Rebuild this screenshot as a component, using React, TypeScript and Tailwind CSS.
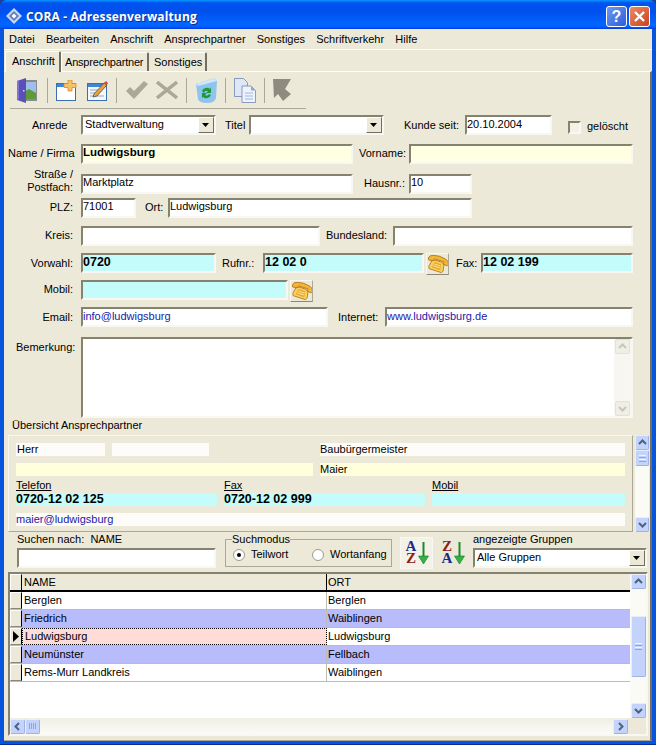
import type { ReactNode } from "react"

const sunken = "border-2 border-t-[#85836f] border-l-[#85836f] border-r-[#f8f7f1] border-b-[#f8f7f1]"

function Field({ className, text, tone, high }: { className: string; text?: string; tone?: string; high?: boolean }) {
  return (
    <div className={`${className} ${sunken} h-[20px] flex items-center ${high ? "pb-[3px]" : "pb-[2px]"} overflow-hidden whitespace-nowrap ${tone ?? "bg-white"}`}>
      {text}
    </div>
  )
}

function DropButton() {
  return (
    <div className="w-[16px] h-[16px] bg-[#ece9d8] border border-t-white border-l-white border-r-[#716f64] border-b-[#716f64] flex items-center justify-center">
      <svg width="8" height="5" viewBox="0 0 8 5"><path d="M0 0h7L3.500 4z" fill="#000" /></svg>
    </div>
  )
}

function Combo({ className, text }: { className: string; text?: string }) {
  return (
    <div className={`${className} ${sunken} h-[20px] bg-white flex items-center justify-between pl-[2px] whitespace-nowrap`}>
      <span className="pb-[1px]">{text}</span>
      <DropButton />
    </div>
  )
}

function Row({ className, children }: { className: string; children: ReactNode }) {
  return <div className={`${className} h-[20px] flex items-center shrink-0`}>{children}</div>
}

function Label({ className, children, low }: { className: string; children: ReactNode; low?: boolean }) {
  return <div className={`${className} shrink-0 whitespace-nowrap ${low ? "pt-[1px]" : "pb-[1px]"}`}>{children}</div>
}

function ScrollBtn({ dir, disabled, size }: { dir: "up" | "down" | "left" | "right"; disabled?: boolean; size?: string }) {
  const d = { up: "M2 7l3.500-3.500L9 7", down: "M2 4l3.500 3.500L9 4", left: "M7 2L3.500 5.500 7 9", right: "M4 2l3.500 3.500L4 9" }[dir]
  return (
    <div className={`${size ?? "w-[15px]"} h-[15px] shrink-0 rounded-[2px] border flex items-center justify-center ${disabled ? "bg-[#f0efe6] border-[#e4e2d6]" : "bg-[#c3d3fb] border-t-[#e6eefc] border-l-[#e6eefc] border-r-[#9db3e2] border-b-[#9db3e2]"}`}>
      <svg width="11" height="11" viewBox="0 0 11 11" fill="none">
        <path d={d} stroke={disabled ? "#c8c6b8" : "#4d6185"} strokeWidth="2" />
      </svg>
    </div>
  )
}

function ThumbV({ className }: { className: string }) {
  return (
    <div className={`${className} shrink-0 rounded-[2px] bg-[#c3d3fb] border border-t-[#e6eefc] border-l-[#e6eefc] border-r-[#9db3e2] border-b-[#9db3e2] flex flex-col items-center justify-center gap-[1px]`}>
      <div className="w-[7px] h-[1px] bg-[#eef4fe]" />
      <div className="w-[7px] h-[1px] bg-[#8fa6d6]" />
      <div className="w-[7px] h-[1px] bg-[#eef4fe]" />
      <div className="w-[7px] h-[1px] bg-[#8fa6d6]" />
    </div>
  )
}

function DoorIcon() {
  return (
    <svg width="22" height="25" viewBox="0 0 22 25" className="shrink-0">
      <rect x="6" y="2" width="15" height="21" fill="#8a8a90" />
      <rect x="8" y="4" width="12" height="17" fill="#9cc0ea" />
      <path d="M8 14l5-3 7 4v6H8z" fill="#5d9a3c" />
      <path d="M1 3l9-3v25l-9-3z" fill="#5a50b8" />
      <path d="M1 3l2-.7v19.500l-2-.3z" fill="#7d74d4" />
      <rect x="7" y="12" width="1.500" height="1.500" fill="#d8d8f0" />
    </svg>
  )
}

function NewIcon() {
  return (
    <svg width="21" height="21" viewBox="0 0 21 21" className="shrink-0">
      <rect x="0.500" y="3.500" width="19" height="17" fill="#fff" stroke="#3d6fb0" />
      <rect x="1" y="4" width="18" height="3" fill="#3f86d8" />
      <path d="M12 0h4v3.500h4v4h-4V11h-4V7.500H8v-4h4z" fill="#f5c265" stroke="#d58a2c" strokeWidth="0.8" />
    </svg>
  )
}

function EditIcon() {
  return (
    <svg width="21" height="21" viewBox="0 0 21 21" className="shrink-0">
      <rect x="0.500" y="3.500" width="19" height="17" fill="#f4f7fb" stroke="#3d6fb0" />
      <rect x="1" y="4" width="18" height="3" fill="#3f86d8" />
      <path d="M3 10h9M3 13h7M3 16h14" stroke="#8fa9c8" />
      <path d="M6 17l1-3L17 3l3 2-10 11z" fill="#e8a33c" stroke="#444" strokeWidth="0.7" />
      <path d="M17 3l3 2 1-2-2-2z" fill="#d84a3c" />
    </svg>
  )
}

function CheckIcon() {
  return (
    <svg width="22" height="18" viewBox="0 0 22 18" className="shrink-0">
      <path d="M0 10l4-4 4 4L18 0l4 3L8 18z" fill="#aca899" />
    </svg>
  )
}

function CrossIcon() {
  return (
    <svg width="22" height="18" viewBox="0 0 22 18" className="shrink-0">
      <path d="M1 1l20 16M21 1L1 17" stroke="#aca899" strokeWidth="3.400" />
    </svg>
  )
}

function BinIcon() {
  return (
    <svg width="22" height="25" viewBox="0 0 22 25" className="shrink-0">
      <path d="M1 6l18-6 3 3-1 17q-1 5-9 5T3 21z" fill="#8fc4ee" />
      <path d="M1 6l18-6 3 3-19 5z" fill="#cfe6f8" />
      <path d="M7 13a5 5 0 0 1 8-2l1-2v6h-5l2-2a3 3 0 0 0-4 2zM16 17a5 5 0 0 1-8 2l-1 1v-5h5l-2 2a3 3 0 0 0 4-1z" fill="#1d9a38" />
    </svg>
  )
}

function CopyIcon() {
  return (
    <svg width="22" height="25" viewBox="0 0 22 25" className="shrink-0">
      <path d="M.500.500h9l4 4v14h-13z" fill="#dfe7f6" stroke="#6f86b8" strokeWidth="0.8" />
      <path d="M8 8h9l4.500 4.500v12H8z" fill="#eef3fb" stroke="#6f86b8" strokeWidth="0.8" />
      <path d="M17 8l4.500 4.500H17z" fill="#8fa9d8" />
      <path d="M11 15h8M11 18h8M11 21h8" stroke="#9fb6dc" />
    </svg>
  )
}

function BackIcon() {
  return (
    <svg width="20" height="23" viewBox="0 0 20 23" className="shrink-0">
      <path d="M0 0h18l-6 10 6 5-8 7-5-7-4 4z" fill="#8f8c7f" />
    </svg>
  )
}

function PhoneIcon() {
  return (
    <div className="w-[23px] h-[22px] self-start shrink-0 ml-[2px] flex items-center justify-center border border-t-[#f8f7f1] border-l-[#f8f7f1] border-r-[#aca899] border-b-[#8a8878]">
      <svg width="21" height="20" viewBox="0 0 21 20">
        <g transform="rotate(18 10.500 10)">
          <path d="M0 7q0-3 4-4 6-2 13 0 4 1 4 4l-1 2-4-1V6H6v2L1 9z" fill="#f2b632" stroke="#b5761a" strokeWidth="0.8" />
          <path d="M4 9l3-2h7l3 2 1 6-1 2H4l-1-2z" fill="#f7d25a" stroke="#b5761a" strokeWidth="0.8" />
          <path d="M7 9h7l1 6H6z" fill="#e8a52c" />
          <path d="M7 11h7M7 13h7" stroke="#fbe69a" />
        </g>
      </svg>
    </div>
  )
}

function SortIcon({ first, second, firstColor, secondColor }: { first: string; second: string; firstColor: string; secondColor: string }) {
  return (
    <div className="flex items-start h-[24px]">
      <div className="w-[13px] flex flex-col items-center font-['Liberation_Serif',serif] font-bold text-[15px] leading-[11px]">
        <span className={firstColor}>{first}</span>
        <span className={`mt-[1px] ${secondColor}`}>{second}</span>
      </div>
      <svg width="11" height="24" viewBox="0 0 11 24">
        <path d="M4.500 1h2v15h-2z" fill="#1a8a2c" />
        <path d="M.500 15h10l-5 8z" fill="#35b04a" stroke="#1a7a28" strokeWidth="0.6" />
      </svg>
    </div>
  )
}

const rows = [
  { name: "Berglen", ort: "Berglen", bg: "bg-white" },
  { name: "Friedrich", ort: "Waiblingen", bg: "bg-[#b8bcfb]" },
  { name: "Ludwigsburg", ort: "Ludwigsburg", bg: "bg-white", current: true },
  { name: "Neumünster", ort: "Fellbach", bg: "bg-[#b8bcfb]" },
  { name: "Rems-Murr Landkreis", ort: "Waiblingen", bg: "bg-white" },
]

export default function App() {
  return (
    <div className="w-[656px] h-[745px] bg-[#1c3f9c] font-['Liberation_Sans',sans-serif] text-[11px] leading-[13px] text-black overflow-hidden">
      <div className="h-full flex flex-col rounded-t-[7px] bg-[#0855dd] border-b-[1px] border-[#0a2f9a]">
        {/* title bar */}
        <div className="h-[29px] shrink-0 rounded-t-[7px] flex items-center pt-[3px] pl-[6px] pr-[6px] bg-[linear-gradient(180deg,#0997ff_0%,#0053ee_10%,#0050ee_40%,#0066ff_85%,#005bff_93%,#003dd7_100%)]">
          <svg width="16" height="16" viewBox="0 0 16 16" className="shrink-0">
            <path d="M8 0l8 8-8 8-8-8z" fill="#c9d8f0" />
            <path d="M8 3l5 5-5 5-5-5z" fill="#5f7fb8" />
            <path d="M8 5.500L10.500 8 8 10.500 5.500 8z" fill="#fff" />
          </svg>
          <div className="ml-[4px] flex-1 text-white font-['Open_Sans',sans-serif] font-bold text-[12px] tracking-[0.15px] [text-shadow:1px_1px_#0f2f8f]">
            CORA - Adressenverwaltung
          </div>
          <div className="w-[21px] h-[21px] rounded-[3px] border border-white bg-[linear-gradient(135deg,#6d98f0,#2a5fdc)] flex items-center justify-center text-white font-bold text-[16px]">?</div>
          <div className="ml-[2px] w-[21px] h-[21px] rounded-[3px] border border-white bg-[linear-gradient(135deg,#ec8a66,#c9421f)] flex items-center justify-center">
            <svg width="13" height="13" viewBox="0 0 13 13"><path d="M2 2l9 9M11 2l-9 9" stroke="#fff" strokeWidth="2.400" /></svg>
          </div>
        </div>

        <div className="mx-[4px] mb-[3px] flex-1 min-h-0 bg-[#ece9d8] flex flex-col">
          {/* menu */}
          <div className="h-[20px] shrink-0 flex items-center pl-[5px] gap-[11.200px] border-b border-white box-content">
            {["Datei", "Bearbeiten", "Anschrift", "Ansprechpartner", "Sonstiges", "Schriftverkehr", "Hilfe"].map((m) => (
              <span key={m}>{m}</span>
            ))}
          </div>

          {/* tabs */}
          <div className="h-[21px] shrink-0 flex items-end pl-[1px] relative z-10">
            <div className="w-[56px] h-[21px] -mb-[1px] bg-[#ece9d8] border-l border-t border-white border-r-2 border-r-[#716f64] rounded-t-[2px] flex items-center pl-[6px] pb-[2px]">Anschrift</div>
            <div className="w-[88px] h-[19px] border-l border-t border-white border-r-2 border-r-[#716f64] rounded-t-[2px] flex items-center pl-[3px] tracking-[-0.2px] whitespace-nowrap">Ansprechpartner</div>
            <div className="w-[58px] h-[19px] border-t border-white border-r-2 border-r-[#716f64] rounded-t-[2px] flex items-center pl-[5px]">Sonstiges</div>
          </div>

          {/* page */}
          <div className="flex-1 min-h-0 flex flex-col border-t border-white border-r-2 border-r-[#716f64] border-b border-b-[#aca899]">
            {/* toolbar */}
            <div className="h-[37px] w-[296px] ml-[6px] shrink-0 flex items-center border-b border-[#aca899] pl-[6px]">
              <DoorIcon />
              <div className="w-[1px] h-[25px] bg-[#aca899] ml-[9px] mr-[8px]" />
              <NewIcon />
              <div className="ml-[10px]"><EditIcon /></div>
              <div className="w-[1px] h-[25px] bg-[#aca899] ml-[8px] mr-[9px]" />
              <CheckIcon />
              <div className="ml-[8px]"><CrossIcon /></div>
              <div className="w-[1px] h-[25px] bg-[#aca899] ml-[8px] mr-[8px]" />
              <BinIcon />
              <div className="w-[1px] h-[25px] bg-[#aca899] ml-[8px] mr-[8px]" />
              <CopyIcon />
              <div className="w-[1px] h-[25px] bg-[#aca899] ml-[8px] mr-[8px]" />
              <BackIcon />
            </div>

            {/* address form */}
            <Row className="mt-[6px]">
              <Label low className="w-[77px] pl-[28px]">Anrede</Label>
              <Combo className="w-[135px]" text="Stadtverwaltung" />
              <Label low className="ml-[9px] w-[24px]">Titel</Label>
              <Combo className="w-[135px]" />
              <Label low className="ml-[20px] w-[61px]">Kunde seit:</Label>
              <Field className="w-[87px]" text="20.10.2004" />
              <div className={`ml-[16px] mt-[5px] w-[13px] h-[13px] bg-[#f4f2e8] ${sunken}`} />
              <Label className="ml-[6px] mt-[3px]">gelöscht</Label>
            </Row>
            <Row className="mt-[9px]">
              <Label className="w-[77px] pl-[4px]">Name / Firma</Label>
              <Field high className="w-[272px] font-bold text-[11.500px]" text="Ludwigsburg" tone="bg-[#ffffe1]" />
              <Label className="ml-[6px] w-[50px]">Vorname:</Label>
              <Field className="w-[224px]" tone="bg-[#ffffe1]" />
            </Row>
            <Row className="mt-[10px]">
              <Label className="w-[77px] pr-[8px] text-right -mt-[5px]">
                Straße /<br />Postfach:
              </Label>
              <Field high className="w-[272px]" text="Marktplatz" />
              <Label className="ml-[11px] w-[45px]">Hausnr.:</Label>
              <Field high className="w-[63px]" text="10" />
            </Row>
            <Row className="mt-[4px]">
              <Label className="w-[77px] pr-[8px] text-right">PLZ:</Label>
              <Field high className="w-[55px]" text="71001" />
              <Label className="ml-[9px] w-[23px]">Ort:</Label>
              <Field high className="w-[304px]" text="Ludwigsburg" />
            </Row>
            <Row className="mt-[8px]">
              <Label className="w-[77px] pr-[8px] text-right">Kreis:</Label>
              <Field className="w-[239px]" />
              <Label className="ml-[6px] w-[67px]">Bundesland:</Label>
              <Field className="w-[240px]" />
            </Row>
            <Row className="mt-[7px]">
              <Label low className="w-[77px] pr-[8px] text-right">Vorwahl:</Label>
              <Field className="w-[135px] font-bold text-[12.500px]" text="0720" tone="bg-[#c4fcfc]" />
              <Label low className="ml-[6px] w-[41px]">Rufnr.:</Label>
              <Field className="w-[161px] font-bold text-[12.500px]" text="12 02 0" tone="bg-[#c4fcfc]" />
              <PhoneIcon />
              <Label low className="ml-[7px] w-[25px]">Fax:</Label>
              <Field className="w-[152px] font-bold text-[12.500px]" text="12 02 199" tone="bg-[#c4fcfc]" />
            </Row>
            <Row className="mt-[7px]">
              <Label className="w-[77px] pr-[8px] text-right">Mobil:</Label>
              <Field className="w-[207px]" tone="bg-[#c4fcfc]" />
              <PhoneIcon />
            </Row>
            <Row className="mt-[7px]">
              <Label low className="w-[77px] pr-[8px] text-right">Email:</Label>
              <Field className="w-[247px] text-[#1a1aa8]" text="info@ludwigsburg" />
              <Label low className="ml-[10px] w-[47px]">Internet:</Label>
              <Field className="w-[248px] text-[#1a1aa8]" text="www.ludwigsburg.de" />
            </Row>

            {/* bemerkung */}
            <div className="mt-[10px] h-[81px] shrink-0 flex">
              <Label className="w-[77px] pl-[12px] pt-[4px]">Bemerkung:</Label>
              <div className={`w-[552px] ${sunken} bg-white flex justify-end`}>
                <div className="w-[17px] flex flex-col justify-between items-center bg-[#f7f6f1]">
                  <ScrollBtn dir="up" disabled />
                  <ScrollBtn dir="down" disabled />
                </div>
              </div>
            </div>

            <div className="mt-[1px] ml-[8px] h-[13px] shrink-0 leading-[13px]">Übersicht Ansprechpartner</div>

            {/* contact overview */}
            <div className="mt-[3px] ml-[4px] h-[97px] shrink-0 flex">
              <div className="w-[625px] border border-[#f8f7f1] border-b-[#aca899] border-r-[#aca899] pl-[7px] pt-[7px] flex flex-col">
                <div className="flex h-[13px]">
                  <div className="w-[89px] bg-[#fdfcf8] pl-[1px]">Herr</div>
                  <div className="ml-[7px] w-[97px] bg-[#fdfcf8]" />
                  <div className="ml-[111px] w-[305px] bg-[#fdfcf8]">Baubürgermeister</div>
                </div>
                <div className="flex h-[13px] mt-[7px]">
                  <div className="w-[297px] bg-[#ffffdc]" />
                  <div className="ml-[7px] w-[305px] bg-[#ffffdc]">Maier</div>
                </div>
                <div className="flex h-[13px] mt-[3px] underline">
                  <div className="w-[208px]">Telefon</div>
                  <div className="w-[208px]">Fax</div>
                  <div>Mobil</div>
                </div>
                <div className="flex h-[13px] mt-[1px] font-bold text-[12.500px]">
                  <div className="w-[201px] bg-[#c4fcfc]">0720-12 02 125</div>
                  <div className="ml-[7px] w-[201px] bg-[#c4fcfc]">0720-12 02 999</div>
                  <div className="ml-[7px] w-[193px] bg-[#c4fcfc]" />
                </div>
                <div className="h-[13px] mt-[7px] w-[609px] bg-[#fdfcf8] text-[#1a1aa8]">maier@ludwigsburg</div>
              </div>
              <div className="ml-[2px] w-[14px] flex flex-col justify-between bg-[#fbfbf6]">
                <div className="flex flex-col">
                  <ScrollBtn dir="up" size="w-[14px]" />
                  <ThumbV className="w-[14px] h-[16px]" />
                </div>
                <ScrollBtn dir="down" size="w-[14px]" />
              </div>
            </div>

            {/* search bar */}
            <div className="mt-[2px] ml-[13px] h-[33px] shrink-0 flex items-start">
              <div className="w-[199px] shrink-0">
                <div className="-mt-[1px] h-[12px] leading-[12px] whitespace-pre">Suchen nach:  NAME</div>
                <Field className="w-[199px] mt-[3px]" />
              </div>
              <fieldset className="ml-[9px] w-[167px] h-[33px] border border-[#aca899] shrink-0">
                <legend className="ml-[6px] leading-[10px]">Suchmodus</legend>
                <div className="flex items-center pl-[7px] pt-[4px]">
                  <div className="w-[12px] h-[12px] rounded-full bg-white border border-[#9d9b8c] flex items-center justify-center">
                    <div className="w-[4px] h-[4px] rounded-full bg-black" />
                  </div>
                  <span className="ml-[6px] w-[50px]">Teilwort</span>
                  <div className="ml-[11px] w-[12px] h-[12px] rounded-full bg-white border border-[#9d9b8c]" />
                  <span className="ml-[6px]">Wortanfang</span>
                </div>
              </fieldset>
              <div className="ml-[8px] mt-[3px] w-[33px] h-[32px] shrink-0 bg-[#f4f2e8] border border-[#f8f7f1] flex items-center justify-center">
                <SortIcon first="A" second="Z" firstColor="text-[#1a2a8a]" secondColor="text-[#8a2020]" />
              </div>
              <div className="ml-[3px] mt-[3px] w-[33px] h-[32px] shrink-0 flex items-center justify-center">
                <SortIcon first="Z" second="A" firstColor="text-[#8a2020]" secondColor="text-[#1a2a8a]" />
              </div>
              <div className="ml-[4px] w-[174px] shrink-0">
                <div className="-mt-[1px] h-[12px] leading-[12px]">angezeigte Gruppen</div>
                <Combo className="w-[174px] mt-[3px]" text="Alle Gruppen" />
              </div>
            </div>

            {/* result grid */}
            <div className={`mt-[5px] ml-[4px] w-[640px] flex-1 min-h-0 ${sunken} bg-white flex flex-col`}>
              <div className="flex-1 min-h-0 flex">
                <div className="flex-1 min-w-0 flex flex-col">
                  <div className="h-[18px] shrink-0 flex bg-[#ece9d8] border-b-2 border-black">
                    <div className="w-[12px] border-r border-black border-t border-t-white border-l border-l-white" />
                    <div className="w-[305px] border-r border-black pl-[2px] flex items-center">NAME</div>
                    <div className="flex-1 pl-[1px] flex items-center">ORT</div>
                  </div>
                  {rows.map((r) => (
                    <div key={r.name} className={`h-[18px] shrink-0 flex border-b border-[#bdbdb8] ${r.bg}`}>
                      <div className="w-[12px] bg-[#ece9d8] border-r border-black border-b border-b-[#8a8878] border-t border-t-white border-l border-l-white flex items-center justify-center">
                        {r.current && <svg width="7" height="11" viewBox="0 0 7 11"><path d="M0 0l6 5.500L0 11z" fill="#000" /></svg>}
                      </div>
                      <div className={`w-[305px] pl-[2px] flex items-center border-r ${r.current ? "bg-[#ffdcd8] border border-dotted border-black" : "border-[#bdbdb8]"}`}>{r.name}</div>
                      <div className="flex-1 pl-[1px] flex items-center">{r.ort}</div>
                    </div>
                  ))}
                </div>
                <div className="w-[16px] shrink-0 flex flex-col items-center bg-[#fbfbf6]">
                  <ScrollBtn dir="up" />
                  <ThumbV className="w-[15px] h-[61px] mt-[27px]" />
                  <div className="flex-1" />
                  <ScrollBtn dir="down" />
                </div>
              </div>
              <div className="h-[16px] shrink-0 flex bg-[linear-gradient(180deg,#f0efe6,#fbfbf6)] items-center">
                <ScrollBtn dir="left" />
                <div className="w-[15px] h-[15px] rounded-[2px] bg-[#c3d3fb] border border-[#e6eefc] border-r-[#9db3e2] border-b-[#9db3e2] flex items-center justify-center gap-[1px]">
                  <div className="w-[1px] h-[6px] bg-[#8fa6d6]" />
                  <div className="w-[1px] h-[6px] bg-[#8fa6d6]" />
                  <div className="w-[1px] h-[6px] bg-[#8fa6d6]" />
                  <div className="w-[1px] h-[6px] bg-[#8fa6d6]" />
                </div>
                <div className="flex-1" />
                <ScrollBtn dir="right" />
                <div className="w-[18px] h-full bg-[#ece9d8]" />
              </div>
            </div>
            <div className="h-[4px] shrink-0" />
          </div>
        </div>
      </div>
    </div>
  )
}
